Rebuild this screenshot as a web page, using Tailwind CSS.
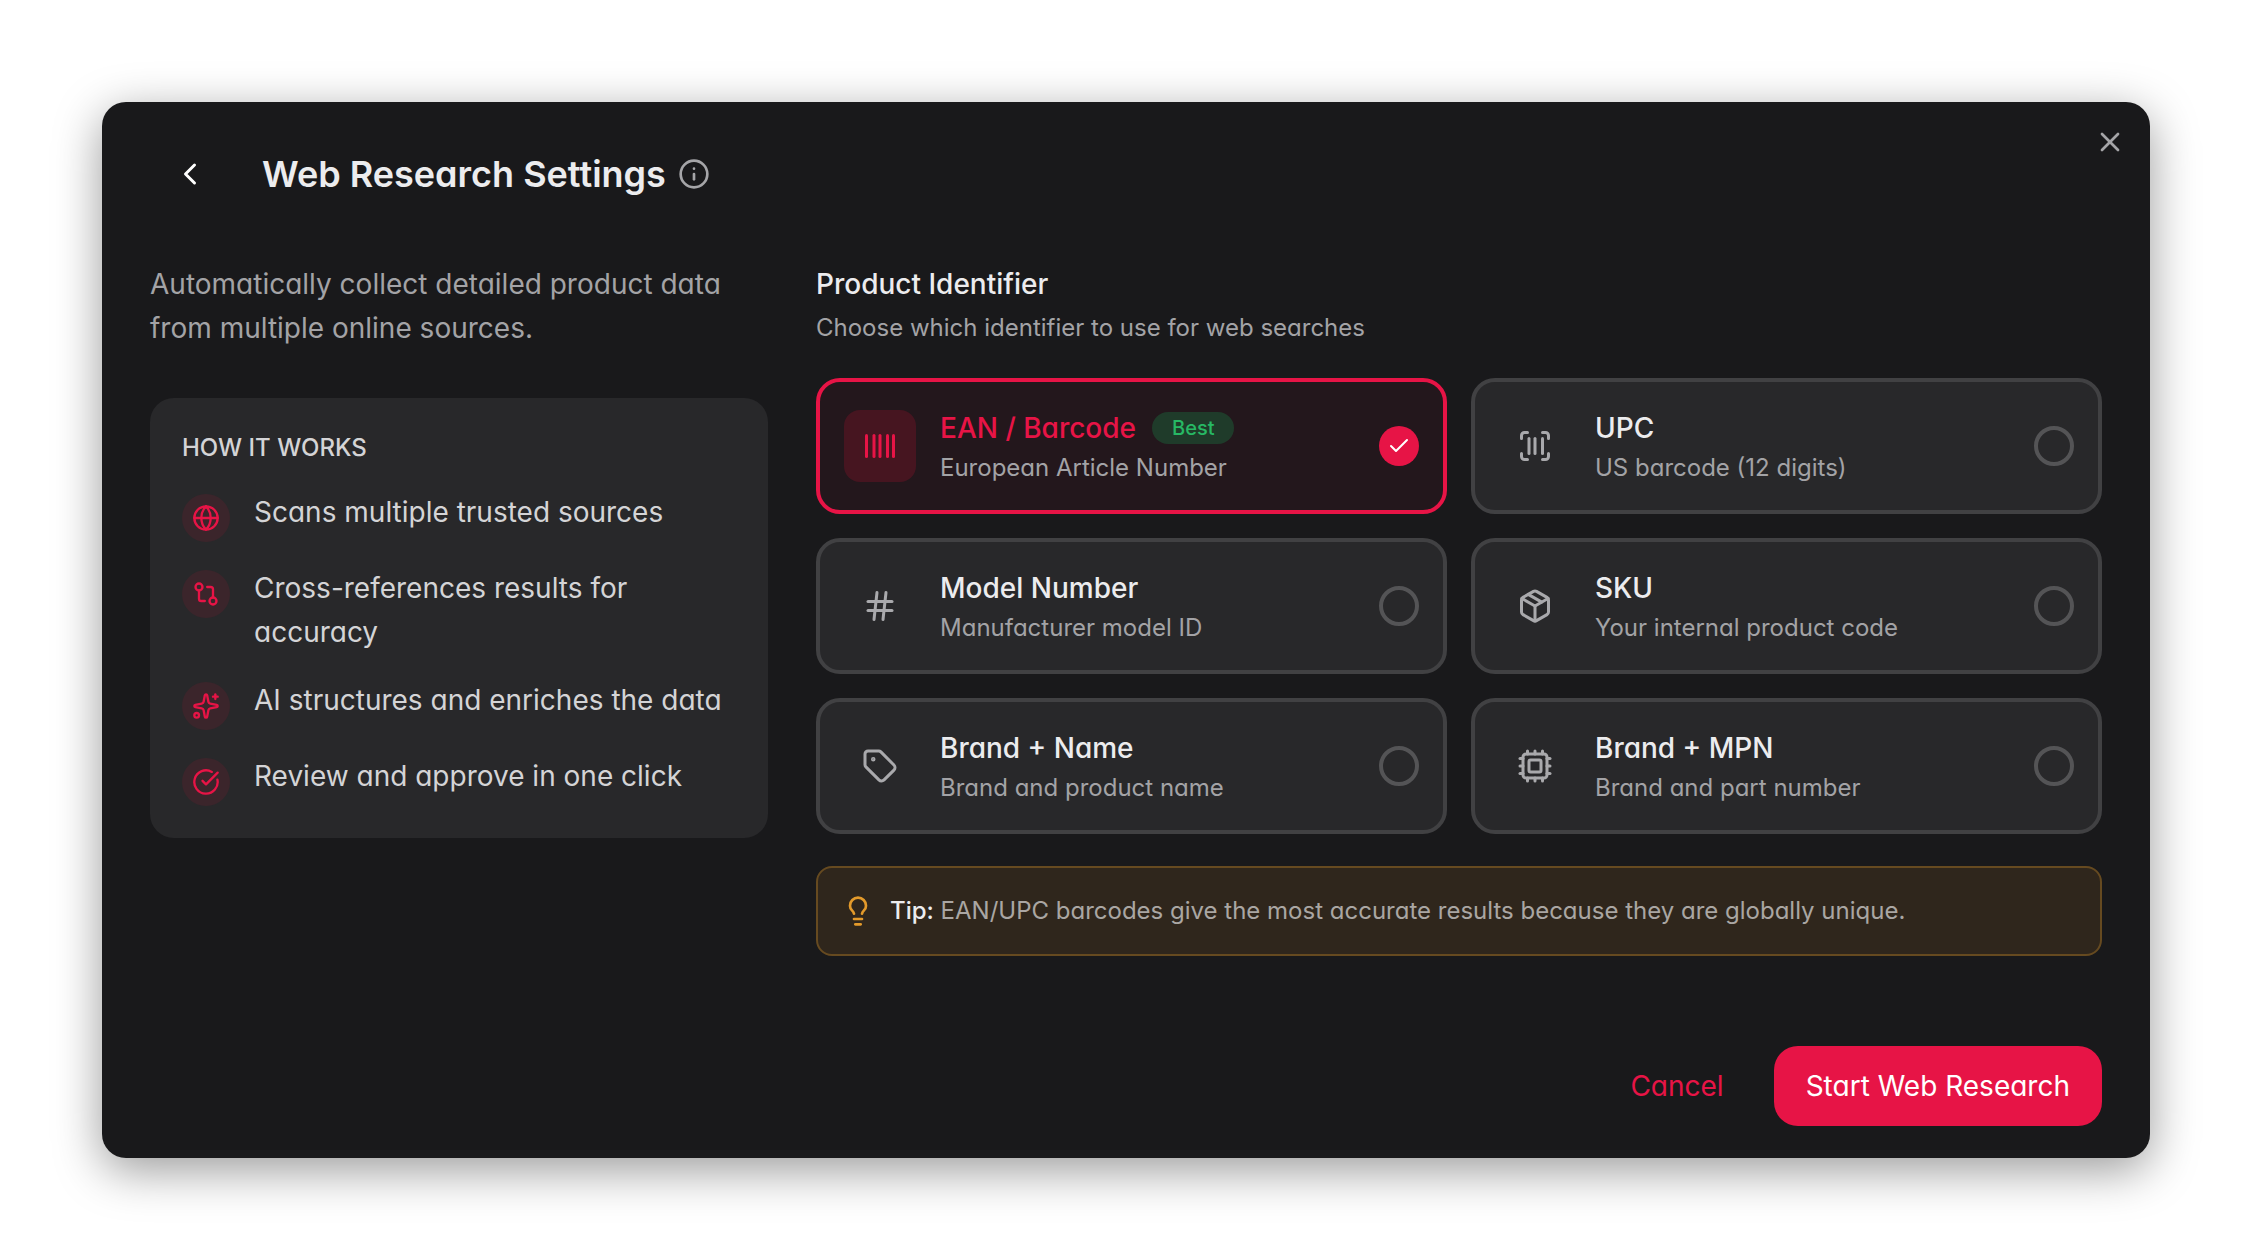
<!DOCTYPE html>
<html lang="en">
<head>
    <meta charset="UTF-8">
    <meta name="viewport" content="width=device-width, initial-scale=1.0">
    <title>Web Research Settings</title>
    <script src="https://cdn.jsdelivr.net/npm/@tailwindcss/browser@4"></script>
</head>
<body class="flex min-h-screen items-center bg-white p-[102px] font-['Inter',sans-serif] [font-feature-settings:'cv11'] text-[#ececee]">

    <div role="dialog" aria-labelledby="title" class="relative w-full rounded-3xl bg-[#19191b] px-12 py-8 shadow-[0_12px_48px_rgba(0,0,0,0.4)]">

        <!-- Header -->
        <header class="flex items-center gap-8">
            <button type="button" aria-label="Back" class="flex size-20 items-center justify-center text-white">
                <svg class="size-9" viewBox="0 0 24 24" fill="none" stroke="currentColor" stroke-width="2" stroke-linecap="round" stroke-linejoin="round"><path d="m15 18-6-6 6-6"/></svg>
            </button>
            <div class="flex items-center gap-3">
                <h1 id="title" class="text-[36px] leading-[48px] font-semibold">Web Research Settings</h1>
                <button type="button" aria-label="About web research" class="text-[#a5a5a8]">
                    <svg class="size-8" viewBox="0 0 24 24" fill="none" stroke="currentColor" stroke-width="2" stroke-linecap="round" stroke-linejoin="round"><circle cx="12" cy="12" r="10"/><path d="M12 16v-4"/><path d="M12 8h.01"/></svg>
                </button>
            </div>
        </header>
        <button type="button" aria-label="Close" class="absolute top-6 right-6 text-[#a5a5a8]">
            <svg class="size-8" viewBox="0 0 24 24" fill="none" stroke="currentColor" stroke-width="2" stroke-linecap="round" stroke-linejoin="round"><path d="M18 6 6 18"/><path d="m6 6 12 12"/></svg>
        </button>

        <div class="mt-12 grid grid-cols-[309fr_643fr] gap-12">

            <!-- Left column -->
            <div>
                <p class="text-[28px] leading-[44px] text-[#a3a3a6]">Automatically collect detailed product data from multiple online sources.</p>
                <section class="mt-12 rounded-3xl bg-[#28282a] p-8">
                    <h2 class="text-[24px] leading-[36px] font-medium text-[#d4d4d6]">HOW IT WORKS</h2>
                    <ul class="mt-6 space-y-6 text-[28px] leading-[44px] text-[#d4d4d6]">
                        <li class="flex items-start gap-6">
                            <span class="mt-1 flex size-12 shrink-0 items-center justify-center rounded-full bg-[#3b252b] text-[#e71446]">
                                <svg class="size-7" viewBox="0 0 24 24" fill="none" stroke="currentColor" stroke-width="2" stroke-linecap="round" stroke-linejoin="round"><circle cx="12" cy="12" r="10"/><path d="M12 2a14.5 14.5 0 0 0 0 20 14.5 14.5 0 0 0 0-20"/><path d="M2 12h20"/></svg>
                            </span>
                            <span>Scans multiple trusted sources</span>
                        </li>
                        <li class="flex items-start gap-6">
                            <span class="mt-1 flex size-12 shrink-0 items-center justify-center rounded-full bg-[#3b252b] text-[#e71446]">
                                <svg class="size-7" viewBox="0 0 24 24" fill="none" stroke="currentColor" stroke-width="2" stroke-linecap="round" stroke-linejoin="round"><circle cx="18" cy="18" r="3"/><circle cx="6" cy="6" r="3"/><path d="M13 6h3a2 2 0 0 1 2 2v7"/><path d="M11 18H8a2 2 0 0 1-2-2V9"/></svg>
                            </span>
                            <span>Cross-references results for accuracy</span>
                        </li>
                        <li class="flex items-start gap-6">
                            <span class="mt-1 flex size-12 shrink-0 items-center justify-center rounded-full bg-[#3b252b] text-[#e71446]">
                                <svg class="size-7" viewBox="0 0 24 24" fill="none" stroke="currentColor" stroke-width="2" stroke-linecap="round" stroke-linejoin="round"><path d="M11.017 2.814a1 1 0 0 1 1.966 0l1.051 5.558a2 2 0 0 0 1.594 1.594l5.558 1.051a1 1 0 0 1 0 1.966l-5.558 1.051a2 2 0 0 0-1.594 1.594l-1.051 5.558a1 1 0 0 1-1.966 0l-1.051-5.558a2 2 0 0 0-1.594-1.594l-5.558-1.051a1 1 0 0 1 0-1.966l5.558-1.051a2 2 0 0 0 1.594-1.594z"/><path d="M20 2v4"/><path d="M22 4h-4"/><circle cx="4" cy="20" r="2"/></svg>
                            </span>
                            <span>AI structures and enriches the data</span>
                        </li>
                        <li class="flex items-start gap-6">
                            <span class="mt-1 flex size-12 shrink-0 items-center justify-center rounded-full bg-[#3b252b] text-[#e71446]">
                                <svg class="size-7" viewBox="0 0 24 24" fill="none" stroke="currentColor" stroke-width="2" stroke-linecap="round" stroke-linejoin="round"><path d="M21.801 10A10 10 0 1 1 17 3.335"/><path d="m9 11 3 3L22 4"/></svg>
                            </span>
                            <span>Review and approve in one click</span>
                        </li>
                    </ul>
                </section>
            </div>

            <!-- Right column -->
            <div>
                <h2 class="text-[28px] leading-[44px] font-medium">Product Identifier</h2>
                <p class="mt-1 text-[24px] leading-[36px] text-[#a3a3a6]">Choose which identifier to use for web searches</p>

                <div class="mt-8 grid grid-cols-2 gap-6">
                    <label class="flex items-center gap-6 rounded-3xl border-4 border-[#e71446] bg-[#23171c] p-6">
                        <span class="flex size-18 shrink-0 items-center justify-center rounded-2xl bg-[#461520] text-[#e71446]">
                            <svg class="size-9" viewBox="0 0 24 24" fill="none" stroke="currentColor" stroke-width="2" stroke-linecap="round" stroke-linejoin="round"><path d="M3 5v14"/><path d="M8 5v14"/><path d="M12 5v14"/><path d="M17 5v14"/><path d="M21 5v14"/></svg>
                        </span>
                        <span class="flex-1">
                            <span class="flex items-center gap-4 text-[28px] leading-[44px] font-medium text-[#e71446]">EAN / Barcode
                                <span class="rounded-full bg-[#1f3b2a] px-5 text-[20px] leading-[32px] text-[#27b864]">Best</span>
                            </span>
                            <span class="block text-[24px] leading-[36px] text-[#a3a3a6]">European Article Number</span>
                        </span>
                        <span class="relative flex size-10 shrink-0">
                            <input type="radio" name="identifier" checked class="size-10 appearance-none rounded-full bg-[#e71446]">
                            <svg class="absolute inset-2 size-6 text-white" viewBox="0 0 24 24" fill="none" stroke="currentColor" stroke-width="2" stroke-linecap="round" stroke-linejoin="round"><path d="M20 6 9 17l-5-5"/></svg>
                        </span>
                    </label>

                    <label class="flex items-center gap-6 rounded-3xl border-4 border-[#414143] bg-[#28282a] p-6">
                        <span class="flex size-18 shrink-0 items-center justify-center text-[#a9a9ac]">
                            <svg class="size-9" viewBox="0 0 24 24" fill="none" stroke="currentColor" stroke-width="2" stroke-linecap="round" stroke-linejoin="round"><path d="M3 7V5a2 2 0 0 1 2-2h2"/><path d="M17 3h2a2 2 0 0 1 2 2v2"/><path d="M21 17v2a2 2 0 0 1-2 2h-2"/><path d="M7 21H5a2 2 0 0 1-2-2v-2"/><path d="M8 7v10"/><path d="M12 7v10"/><path d="M17 7v10"/></svg>
                        </span>
                        <span class="flex-1">
                            <span class="block text-[28px] leading-[44px] font-medium">UPC</span>
                            <span class="block text-[24px] leading-[36px] text-[#a3a3a6]">US barcode (12 digits)</span>
                        </span>
                        <input type="radio" name="identifier" class="size-10 shrink-0 appearance-none rounded-full border-4 border-[#545456]">
                    </label>

                    <label class="flex items-center gap-6 rounded-3xl border-4 border-[#414143] bg-[#28282a] p-6">
                        <span class="flex size-18 shrink-0 items-center justify-center text-[#a9a9ac]">
                            <svg class="size-9" viewBox="0 0 24 24" fill="none" stroke="currentColor" stroke-width="2" stroke-linecap="round" stroke-linejoin="round"><path d="M4 9h16"/><path d="M4 15h16"/><path d="M10 3 8 21"/><path d="m16 3-2 18"/></svg>
                        </span>
                        <span class="flex-1">
                            <span class="block text-[28px] leading-[44px] font-medium">Model Number</span>
                            <span class="block text-[24px] leading-[36px] text-[#a3a3a6]">Manufacturer model ID</span>
                        </span>
                        <input type="radio" name="identifier" class="size-10 shrink-0 appearance-none rounded-full border-4 border-[#545456]">
                    </label>

                    <label class="flex items-center gap-6 rounded-3xl border-4 border-[#414143] bg-[#28282a] p-6">
                        <span class="flex size-18 shrink-0 items-center justify-center text-[#a9a9ac]">
                            <svg class="size-9" viewBox="0 0 24 24" fill="none" stroke="currentColor" stroke-width="2" stroke-linecap="round" stroke-linejoin="round"><path d="M11 21.73a2 2 0 0 0 2 0l7-4A2 2 0 0 0 21 16V8a2 2 0 0 0-1-1.73l-7-4a2 2 0 0 0-2 0l-7 4A2 2 0 0 0 3 8v8a2 2 0 0 0 1 1.73z"/><path d="M12 22V12"/><path d="M3.29 7 12 12l8.71-5"/><path d="m7.5 4.27 9 5.15"/></svg>
                        </span>
                        <span class="flex-1">
                            <span class="block text-[28px] leading-[44px] font-medium">SKU</span>
                            <span class="block text-[24px] leading-[36px] text-[#a3a3a6]">Your internal product code</span>
                        </span>
                        <input type="radio" name="identifier" class="size-10 shrink-0 appearance-none rounded-full border-4 border-[#545456]">
                    </label>

                    <label class="flex items-center gap-6 rounded-3xl border-4 border-[#414143] bg-[#28282a] p-6">
                        <span class="flex size-18 shrink-0 items-center justify-center text-[#a9a9ac]">
                            <svg class="size-9" viewBox="0 0 24 24" fill="none" stroke="currentColor" stroke-width="2" stroke-linecap="round" stroke-linejoin="round"><path d="M12.586 2.586A2 2 0 0 0 11.172 2H4a2 2 0 0 0-2 2v7.172a2 2 0 0 0 .586 1.414l8.704 8.704a2.426 2.426 0 0 0 3.42 0l6.58-6.58a2.426 2.426 0 0 0 0-3.42z"/><circle cx="7.5" cy="7.5" r=".5" fill="currentColor"/></svg>
                        </span>
                        <span class="flex-1">
                            <span class="block text-[28px] leading-[44px] font-medium">Brand + Name</span>
                            <span class="block text-[24px] leading-[36px] text-[#a3a3a6]">Brand and product name</span>
                        </span>
                        <input type="radio" name="identifier" class="size-10 shrink-0 appearance-none rounded-full border-4 border-[#545456]">
                    </label>

                    <label class="flex items-center gap-6 rounded-3xl border-4 border-[#414143] bg-[#28282a] p-6">
                        <span class="flex size-18 shrink-0 items-center justify-center text-[#a9a9ac]">
                            <svg class="size-9" viewBox="0 0 24 24" fill="none" stroke="currentColor" stroke-width="2" stroke-linecap="round" stroke-linejoin="round"><path d="M12 20v2"/><path d="M12 2v2"/><path d="M17 20v2"/><path d="M17 2v2"/><path d="M2 12h2"/><path d="M2 17h2"/><path d="M2 7h2"/><path d="M20 12h2"/><path d="M20 17h2"/><path d="M20 7h2"/><path d="M7 20v2"/><path d="M7 2v2"/><rect x="4" y="4" width="16" height="16" rx="2"/><rect x="8" y="8" width="8" height="8" rx="1"/></svg>
                        </span>
                        <span class="flex-1">
                            <span class="block text-[28px] leading-[44px] font-medium">Brand + MPN</span>
                            <span class="block text-[24px] leading-[36px] text-[#a3a3a6]">Brand and part number</span>
                        </span>
                        <input type="radio" name="identifier" class="size-10 shrink-0 appearance-none rounded-full border-4 border-[#545456]">
                    </label>
                </div>

                <!-- Tip -->
                <div class="mt-8 flex items-center gap-4 rounded-2xl border-2 border-[#664a20] bg-[#2f261c] p-6">
                    <svg class="size-8 shrink-0 text-[#e39a2b]" viewBox="0 0 24 24" fill="none" stroke="currentColor" stroke-width="2" stroke-linecap="round" stroke-linejoin="round"><path d="M15 14c.2-1 .7-1.7 1.5-2.5 1-.9 1.5-2.2 1.5-3.5A6 6 0 0 0 6 8c0 1 .2 2.2 1.5 3.5.7.7 1.3 1.5 1.5 2.5"/><path d="M9 18h6"/><path d="M10 22h4"/></svg>
                    <p class="text-[24px] leading-[38px] text-[#aaa6a3]"><strong class="font-medium text-[#ececee]">Tip:</strong> EAN/UPC barcodes give the most accurate results because they are globally unique.</p>
                </div>
            </div>
        </div>

        <!-- Footer -->
        <footer class="mt-[90px] flex items-center justify-end gap-[18px] text-[28px] leading-[44px]">
            <button type="button" class="h-20 rounded-3xl px-8 text-[#e71446]">Cancel</button>
            <button type="button" class="h-20 rounded-3xl bg-[#e71446] px-8 text-white">Start Web Research</button>
        </footer>
    </div>

</body>
</html>
